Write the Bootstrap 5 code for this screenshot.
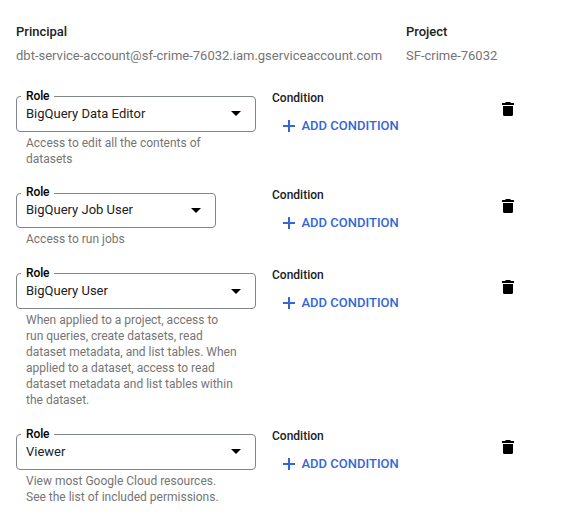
<!DOCTYPE html>
<html lang="en">
<head>
<meta charset="utf-8">
<meta name="viewport" content="width=device-width, initial-scale=1">
<title>Edit permissions</title>
<link href="https://cdn.jsdelivr.net/npm/bootstrap@5.3.0/dist/css/bootstrap.min.css" rel="stylesheet">
<style>
body{font-family:Roboto,sans-serif;font-size:13px;color:#202124;background:#fff;overflow:hidden}
.page{padding:22px 0 0 16px}
.head{height:74.2px}
.head-main{width:390px}
.title{font-weight:500;font-size:13px;line-height:20px}
.sub{color:#757575;font-size:13px;line-height:20px;margin-top:4px;white-space:nowrap}
.role-row{padding-bottom:26.1px}
.role-row:nth-of-type(3){padding-bottom:26.3px}
.role-col{width:256px}
.select-box{width:240px;height:35.6px;border:1px solid #80868b;border-radius:4px;padding:0 14px 0 9px;line-height:18px}
.select-box.narrow{width:200px}
.role-value{margin-top:-.5px}
.float-label{position:absolute;left:4px;top:-9.35px;padding:0 5px;background:#fff;color:#000;font-size:12px;font-weight:500;line-height:16px;letter-spacing:-.1px}
.helper{width:222px;margin:2.9px 0 0 10px;color:#757575;font-size:12px;line-height:16px}
.cond-col{width:230px;margin-top:-6px}
.cond{font-size:12px;font-weight:500;line-height:16px}
.add{color:#3367d6;font-size:13px;font-weight:500;line-height:20px;margin:10px 0 0 11px;gap:6.5px}
.trash{margin-top:6.2px}
svg{display:block;flex:none}
</style>
<script src="https://cdn.jsdelivr.net/npm/bootstrap@5.3.0/dist/js/bootstrap.bundle.min.js" defer></script>
</head>
<body>
<svg width="0" height="0" class="d-none">
<symbol id="plus" viewBox="0 0 12 12"><path d="M5 0h2v5h5v2H7v5H5V7H0V5h5z" fill="#3367d6"/></symbol>
<symbol id="caret" viewBox="0 0 10 5"><path d="M0 0h10L5 5z" fill="#000"/></symbol>
<symbol id="trash" viewBox="0 0 12 14"><path d="M4 0h4l1 1h3v2H0V1h3zM1 4h10v8.500Q11 14 9.500 14h-7Q1 14 1 12.500z" fill="#000"/></symbol>
</svg>
<main class="page">
<header class="head d-flex">
<div class="head-main"><div class="title">Principal</div><div class="sub"><span>dbt-service-account@sf-crime-76032.iam.gserviceaccount.com</span></div></div>
<div><div class="title">Project</div><div class="sub"><span>SF-crime-76032</span></div></div>
</header>
<section class="role-row d-flex align-items-start">
<div class="role-col"><div class="select-box position-relative d-flex align-items-center justify-content-between"><span class="float-label">Role</span><span class="role-value">BigQuery Data Editor</span><svg width="10" height="5"><use href="#caret"/></svg></div><div class="helper">Access to edit all the contents of<br>datasets</div></div>
<div class="cond-col"><div class="cond">Condition</div><div class="add d-flex align-items-center"><svg width="12" height="12"><use href="#plus"/></svg><span>ADD CONDITION</span></div></div>
<svg class="trash" width="12" height="14"><use href="#trash"/></svg>
</section>
<section class="role-row d-flex align-items-start">
<div class="role-col"><div class="select-box narrow position-relative d-flex align-items-center justify-content-between"><span class="float-label">Role</span><span class="role-value">BigQuery Job User</span><svg width="10" height="5"><use href="#caret"/></svg></div><div class="helper">Access to run jobs</div></div>
<div class="cond-col"><div class="cond">Condition</div><div class="add d-flex align-items-center"><svg width="12" height="12"><use href="#plus"/></svg><span>ADD CONDITION</span></div></div>
<svg class="trash" width="12" height="14"><use href="#trash"/></svg>
</section>
<section class="role-row d-flex align-items-start">
<div class="role-col"><div class="select-box position-relative d-flex align-items-center justify-content-between"><span class="float-label">Role</span><span class="role-value">BigQuery User</span><svg width="10" height="5"><use href="#caret"/></svg></div><div class="helper">When applied to a project, access to<br>run queries, create datasets, read<br>dataset metadata, and list tables. When<br>applied to a dataset, access to read<br>dataset metadata and list tables within<br>the dataset.</div></div>
<div class="cond-col"><div class="cond">Condition</div><div class="add d-flex align-items-center"><svg width="12" height="12"><use href="#plus"/></svg><span>ADD CONDITION</span></div></div>
<svg class="trash" width="12" height="14"><use href="#trash"/></svg>
</section>
<section class="role-row d-flex align-items-start">
<div class="role-col"><div class="select-box position-relative d-flex align-items-center justify-content-between"><span class="float-label">Role</span><span class="role-value">Viewer</span><svg width="10" height="5"><use href="#caret"/></svg></div><div class="helper">View most Google Cloud resources.<br>See the list of included permissions.</div></div>
<div class="cond-col"><div class="cond">Condition</div><div class="add d-flex align-items-center"><svg width="12" height="12"><use href="#plus"/></svg><span>ADD CONDITION</span></div></div>
<svg class="trash" width="12" height="14"><use href="#trash"/></svg>
</section>
</main>
</body>
</html>
